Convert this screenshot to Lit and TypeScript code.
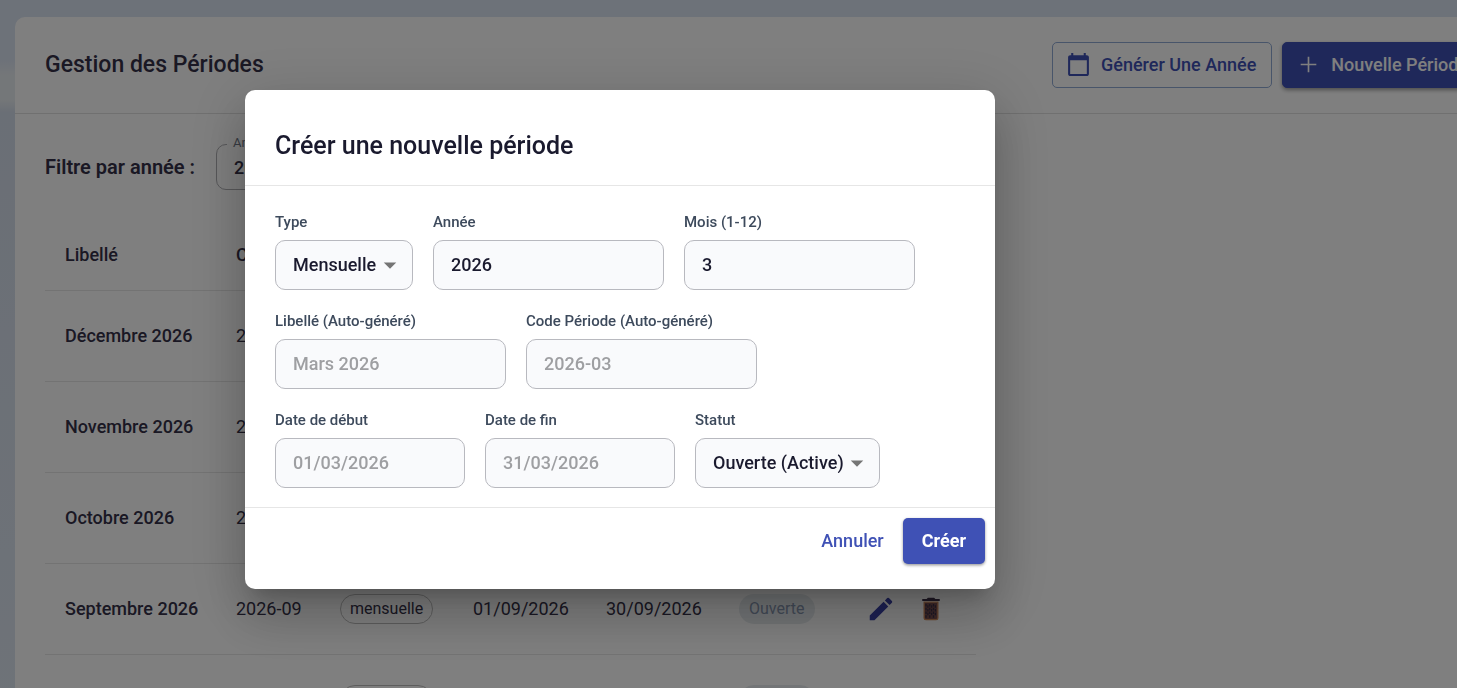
import { LitElement, html, css, svg } from "lit";
import { customElement, property } from "lit/decorators.js";

interface Period {
  label: string;
  code: string;
  start: string;
  end: string;
}

const PERIODS: Period[] = [
  { label: "Décembre 2026", code: "2026-12", start: "01/12/2026", end: "31/12/2026" },
  { label: "Novembre 2026", code: "2026-11", start: "01/11/2026", end: "30/11/2026" },
  { label: "Octobre 2026", code: "2026-10", start: "01/10/2026", end: "31/10/2026" },
  { label: "Septembre 2026", code: "2026-09", start: "01/09/2026", end: "30/09/2026" },
  { label: "Août 2026", code: "2026-08", start: "01/08/2026", end: "31/08/2026" },
];

const caret = html`<svg class="caret" viewBox="0 0 24 24" aria-hidden="true"><path d="M7 10l5 5 5-5z" /></svg>`;

@customElement("period-table")
export class PeriodTable extends LitElement {
  @property({ attribute: false }) periods: Period[] = [];

  static styles = css`
    :host { display: block; }
    .table { border-collapse: collapse; table-layout: fixed; width: 931px; }
    .c-label { width: 171px; }
    .c-code { width: 104px; }
    .c-type, .c-date { width: 133px; }
    .c-status { width: 117px; }
    .th, .td { box-sizing: border-box; padding: 0 20px; text-align: left; white-space: nowrap; border-bottom: 1px solid #e6e6e6; }
    .th { height: 71px; font-weight: 500; }
    .td { height: 91px; font-weight: 400; }
    .strong { font-weight: 500; }
    .chip { display: inline-flex; align-items: center; box-sizing: border-box; height: 30px; padding: 0 9px; border-radius: 15px; font-size: 16px; }
    .chip-type { border: 1px solid #bdbdbd; }
    .chip-open { padding: 0 10px; background: #e6ebee; color: #8696b0; }
    .actions { display: flex; }
    .icon-button { display: flex; padding: 10px; border: 0; background: none; }
    .icon { width: 30px; height: 30px; }
    .edit { fill: #3a42a8; }
    .bin { fill: #3c3048; }
    .bin-body { fill: #7c5050; stroke: #d08c5c; stroke-width: 1; }
  `;

  render() {
    return html`
      <table class="table">
        <colgroup>
          <col class="c-label" /><col class="c-code" /><col class="c-type" /><col class="c-date" /><col class="c-date" /><col class="c-status" /><col />
        </colgroup>
        <thead>
          <tr>
            ${["Libellé", "Code", "Type", "Début", "Fin", "Statut", "Actions"].map((h) => html`<th class="th" scope="col">${h}</th>`)}
          </tr>
        </thead>
        <tbody>
          ${this.periods.map(
            (p) => html`<tr>
              <td class="td strong">${p.label}</td>
              <td class="td">${p.code}</td>
              <td class="td"><span class="chip chip-type">mensuelle</span></td>
              <td class="td">${p.start}</td>
              <td class="td">${p.end}</td>
              <td class="td"><span class="chip chip-open">Ouverte</span></td>
              <td class="td">
                <div class="actions">
                  <button class="icon-button" type="button" aria-label="Modifier">
                    <svg class="icon edit" viewBox="0 0 24 24"><path d="M3 17.25V21h3.75L17.81 9.94l-3.75-3.75L3 17.25zM20.71 7.04c.39-.39.39-1.02 0-1.41l-2.34-2.34a.9959.9959 0 0 0-1.41 0l-1.83 1.83 3.75 3.75 1.83-1.83z" /></svg>
                  </button>
                  <button class="icon-button" type="button" aria-label="Supprimer">
                    <svg class="icon bin" viewBox="0 0 24 24">
                      <path class="bin-body" d="M6.5 6.5V19c0 .9.6 1.5 1.5 1.5h8c.9 0 1.500-.6 1.500-1.500V6.500z" />
                      <path d="M19 4h-3.500l-1-1h-5l-1 1H5v1.500h14V4z" />
                      <path d="M7.500 8h1v2h-1zM9 9h1v2H9zM10.500 8h1v2h-1zM12 9h1v2h-1zM13.500 8h1v2h-1zM15 9h1v2h-1zM7.500 11h1v2h-1zM9 12h1v2H9zM10.500 11h1v2h-1zM12 12h1v2h-1zM13.500 11h1v2h-1zM15 12h1v2h-1zM7.500 14h1v2h-1zM9 15h1v2H9zM10.500 14h1v2h-1zM12 15h1v2h-1zM13.500 14h1v2h-1zM15 15h1v2h-1zM7.500 17h1v2h-1zM10.500 17h1v2h-1zM13.500 17h1v2h-1z" />
                    </svg>
                  </button>
                </div>
              </td>
            </tr>`
          )}
        </tbody>
      </table>
    `;
  }
}

@customElement("period-dialog")
export class PeriodDialog extends LitElement {
  static styles = css`
    :host { display: block; width: 750px; max-width: 100%; }
    .dialog { background: #fff; color: #1a1a2e; border-radius: 10px; box-shadow: 0 14px 19px -9px rgba(0, 0, 0, 0.2), 0 30px 48px 4px rgba(0, 0, 0, 0.14), 0 11px 58px 10px rgba(0, 0, 0, 0.12); }
    .title { margin: 0; padding: 41px 30px 24px; font-size: 25px; line-height: 30px; font-weight: 500; border-bottom: 1px solid #e6e6e6; }
    .body { display: flex; flex-direction: column; gap: 20px; padding: 25px 30px 19px; border-bottom: 1px solid #e6e6e6; }
    .row { display: flex; flex-wrap: wrap; gap: 20px; }
    .field { display: flex; flex-direction: column; gap: 7px; }
    .label { font-size: 15px; line-height: 22px; font-weight: 500; color: #3d4a5c; }
    .control { box-sizing: border-box; height: 50px; width: 231px; padding: 0 17px 1px; border: 1px solid #b8b9bf; border-radius: 10px; background: #f9fafc; color: #1a1a2e; font: 500 18px Roboto, sans-serif; }
    .control:disabled { color: #9e9fa2; opacity: 1; }
    .short { width: 190px; }
    .select { position: relative; display: flex; }
    .select .control { appearance: none; width: auto; padding-right: 35px; }
    .caret { position: absolute; right: 8px; top: 10px; width: 30px; height: 30px; fill: #757575; pointer-events: none; }
    .footer { display: flex; justify-content: flex-end; padding: 10px 10px 25px; }
    .button { height: 46px; padding: 0 19px 1px; border: 0; border-radius: 5px; background: none; color: #3f51b5; font: 500 18px Roboto, sans-serif; }
    .primary { background: #3f51b5; color: #fff; font-weight: 700; box-shadow: 0 1px 3px rgba(0, 0, 0, 0.3), 0 2px 3px rgba(0, 0, 0, 0.14); }
  `;

  private input(id: string, label: string, value: string, disabled = false, short = false) {
    return html`<div class="field">
      <label class="label" for=${id}>${label}</label>
      <input id=${id} class="control ${short ? "short" : ""}" type="text" .value=${value} ?disabled=${disabled} />
    </div>`;
  }

  private select(id: string, label: string, value: string) {
    return html`<div class="field">
      <label class="label" for=${id}>${label}</label>
      <div class="select">
        <select id=${id} class="control"><option>${value}</option></select>
        ${caret}
      </div>
    </div>`;
  }

  render() {
    return html`
      <form class="dialog" role="dialog" aria-labelledby="title">
        <h2 class="title" id="title">Créer une nouvelle période</h2>
        <div class="body">
          <div class="row">
            ${this.select("type", "Type", "Mensuelle")}
            ${this.input("year", "Année", "2026")}
            ${this.input("month", "Mois (1-12)", "3")}
          </div>
          <div class="row">
            ${this.input("name", "Libellé (Auto-généré)", "Mars 2026", true)}
            ${this.input("code", "Code Période (Auto-généré)", "2026-03", true)}
          </div>
          <div class="row">
            ${this.input("start", "Date de début", "01/03/2026", true, true)}
            ${this.input("end", "Date de fin", "31/03/2026", true, true)}
            ${this.select("status", "Statut", "Ouverte (Active)")}
          </div>
        </div>
        <div class="footer">
          <button class="button" type="button">Annuler</button>
          <button class="button primary" type="button">Créer</button>
        </div>
      </form>
    `;
  }
}

@customElement("app-root")
export class AppRoot extends LitElement {
  static styles = css`
    :host { display: block; height: 100vh; overflow: hidden; font: 400 18px Roboto, sans-serif; color: #353148; }
    .page { box-sizing: border-box; min-height: 100vh; padding: 17px 0 0 15px; background: linear-gradient(180deg, #dbe4f2 0, #dbe4f2 60px, #e9eef2 75px, #e9eef2 100px, #d5deec 112px, #dee7f2 100%); }
    .card { margin-right: -57px; background: #fff; border-radius: 10px; }
    .header { display: flex; align-items: center; justify-content: space-between; padding: 25px 30px; border-bottom: 1px solid #e0e0e0; }
    .heading { margin: 0; font-size: 23px; line-height: 30px; font-weight: 500; }
    .toolbar { display: flex; gap: 10px; }
    .button { display: flex; align-items: center; gap: 10px; box-sizing: border-box; height: 46px; padding: 0 15px 1px 13px; border: 1px solid #90aad4; border-radius: 5px; background: none; color: #3f51b5; font: 500 18px Roboto, sans-serif; white-space: nowrap; }
    .primary { border-color: #3f51b5; background: #3f51b5; color: #fff; box-shadow: 0 2px 4px rgba(0, 0, 0, 0.4); }
    .button-icon { width: 25px; height: 25px; fill: currentColor; }
    .content { padding: 30px; }
    .filter { display: flex; align-items: center; gap: 21px; height: 46px; margin-bottom: 29px; }
    .filter-title { font-size: 20px; font-weight: 600; }
    .select { position: relative; }
    .filter-select { box-sizing: border-box; width: 130px; height: 46px; padding: 0 17px; appearance: none; border: 1px solid #b0b0b4; border-radius: 10px; background: #fff; color: inherit; font: 500 18px Roboto, sans-serif; }
    .float-label { position: absolute; left: 11px; top: -9px; padding: 0 6px; background: #fff; color: #6f7787; font-size: 13px; line-height: 16px; }
    .backdrop { position: fixed; inset: 0; display: flex; align-items: center; justify-content: center; padding: 0 217px 9px 0; background: rgba(0, 0, 0, 0.5); }
  `;

  render() {
    return html`
      <main class="page">
        <section class="card">
          <header class="header">
            <h1 class="heading">Gestion des Périodes</h1>
            <div class="toolbar">
              <button class="button" type="button">
                <svg class="button-icon" viewBox="0 0 24 24" aria-hidden="true">${svg`<path d="M20 3h-1V1h-2v2H7V1H5v2H4c-1.100 0-2 .9-2 2v16c0 1.100.9 2 2 2h16c1.100 0 2-.9 2-2V5c0-1.100-.9-2-2-2zm0 18H4V8h16v13z" />`}</svg>
                Générer Une Année
              </button>
              <button class="button primary" type="button">
                <svg class="button-icon" viewBox="0 0 24 24" aria-hidden="true">${svg`<path d="M19.500 12.800h-6.700v6.700h-1.600v-6.700H4.500v-1.600h6.700V4.500h1.600v6.700h6.700z" />`}</svg>
                Nouvelle Période
              </button>
            </div>
          </header>
          <div class="content">
            <div class="filter">
              <span class="filter-title">Filtre par année :</span>
              <div class="select">
                <select id="filter-year" class="filter-select"><option>2026</option></select>
                <label class="float-label" for="filter-year">Année</label>
              </div>
            </div>
            <period-table .periods=${PERIODS}></period-table>
          </div>
        </section>
      </main>
      <div class="backdrop"><period-dialog></period-dialog></div>
    `;
  }
}
